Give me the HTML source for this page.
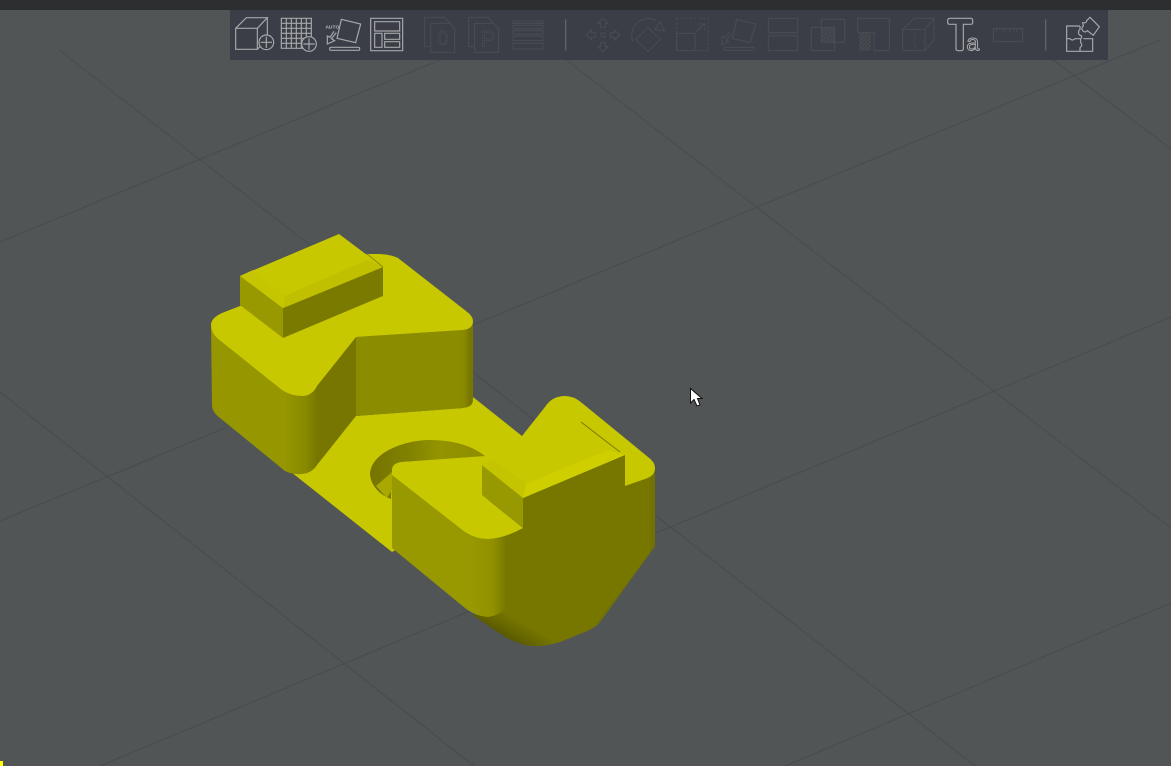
<!DOCTYPE html>
<html><head><meta charset="utf-8"><style>
html,body{margin:0;padding:0;background:#515556;width:1171px;height:766px;overflow:hidden}
svg{display:block;position:absolute;left:0;top:0}
text{font-family:"Liberation Sans",sans-serif}
</style></head><body>
<svg width="1171" height="766" viewBox="0 0 1171 766" xmlns="http://www.w3.org/2000/svg">
<defs>
<linearGradient id="g1" gradientUnits="userSpaceOnUse" x1="285" y1="0" x2="318" y2="0"><stop offset="0" stop-color="#969600"/><stop offset=".35" stop-color="#8e8e00"/><stop offset=".6" stop-color="#8a8a00"/><stop offset="1" stop-color="#767600"/></linearGradient>
<linearGradient id="g2" gradientUnits="userSpaceOnUse" x1="458" y1="0" x2="470" y2="0"><stop offset="0" stop-color="#8c8c00"/><stop offset=".5" stop-color="#8a8a00"/><stop offset="1" stop-color="#767600"/></linearGradient>
<linearGradient id="g3" gradientUnits="userSpaceOnUse" x1="470" y1="0" x2="506" y2="0"><stop offset="0" stop-color="#989800"/><stop offset=".6" stop-color="#929200"/><stop offset="1" stop-color="#787800"/></linearGradient>
<linearGradient id="g4" gradientUnits="userSpaceOnUse" x1="515" y1="645" x2="527" y2="624"><stop offset="0" stop-color="#555500"/><stop offset=".5" stop-color="#686800"/><stop offset="1" stop-color="#777700"/></linearGradient>
<linearGradient id="g5" gradientUnits="userSpaceOnUse" x1="370" y1="0" x2="486" y2="0"><stop offset="0" stop-color="#747400"/><stop offset=".35" stop-color="#828200"/><stop offset=".6" stop-color="#949400"/><stop offset="1" stop-color="#8c8c00"/></linearGradient>
<pattern id="h" width="8" height="8" patternUnits="userSpaceOnUse" patternTransform="rotate(45)"><rect width="8" height="8" fill="#3f4249"/><rect width="3" height="8" fill="#4c4e54"/></pattern>
</defs>
<rect width="1171" height="766" fill="#515556"/>
<g stroke="#4a4b52" stroke-width="1.1" fill="none">
<path d="M59,50L310,245"/>
<path d="M0,242L440,60"/>
<path d="M560,55L1171,528"/>
<path d="M473,325L1160,40"/>
<path d="M1040,50L1171,149"/>
<path d="M1171,317L100,766"/>
<path d="M0,392L474,766"/>
<path d="M0,521L225,428"/>
<path d="M473,372L975,766"/>
<path d="M1171,603L785,766"/>
</g>
<rect x="0" y="0" width="1171" height="10" fill="#2d2e30"/>
<rect x="230" y="10" width="878" height="50" fill="#3b3e47"/>
<!-- model -->
<polygon points="291,472 356,416 463,408 473,397 522,436 530,480 450,520 392,552" fill="#c8c800"/>
<path d="M370,473C372,452 405,440 430,440C455,440 475,447 486,457L402,462Q392,465 392,470L391,499C378,494 370,484 370,473z" fill="url(#g5)"/>
<polygon points="376,486 392,472 392,490 387,498" fill="#a8a800"/>
<path d="M211,325L212,405Q212,412 220,418L285,471Q293,475 302,474Q312,473 317,465L356,416L356,337L300,390z" fill="url(#g1)"/>
<path d="M356,337L463,330Q473,329 473,321L473,400Q473,407 463,408L356,416z" fill="url(#g2)"/>
<path d="M240,306L222,313Q211,318 211,325Q211,332 217,338L282,390Q291,396 302,396Q312,396 317,386L356,337L463,330Q473,329 473,321Q473,316 466,311L398,258Q390,254 378,254L367,254z" fill="#c8c800"/>
<polygon points="240,276 283,308 283,338 240,305" fill="#989800"/>
<polygon points="283,308 383,267 383,296 283,338" fill="#7a7a00"/>
<polygon points="240,276 339,234 383,267 283,308" fill="#c8c800"/>
<polygon points="285,296 367,260 383,267 283,308" fill="#c0c000"/>
<polygon points="240,276 253,270 285,296 283,308" fill="#c6c600"/>
<path d="M367,254L383,267" stroke="#8c8c00" stroke-width="1"/>
<path d="M523,498L625,455L625,486L650,476L655,468L655,546L600,622Q595,628 585,632L560,642Q540,648 525,645Q515,642 505,635L475,615Q488,618 505,609L505,535L523,528z" fill="#777700"/>
<path d="M650,476L655,468V546L650,553z" fill="#727200"/>
<path d="M650,553L655,546L600,622L595,624z" fill="#727200"/>
<path d="M471,614Q488,619 505,609L559,641Q540,648 525,645Q515,642 505,637z" fill="url(#g4)"/>
<path d="M392,470L392,548L465,608Q475,616 488,617Q498,616 505,609L505,530L470,500z" fill="url(#g3)"/>
<path d="M392,470Q392,463 402,462L485,456L482,465L482,495L523,528Q505,538 488,539Q476,539 465,532L392,475z" fill="#c8c800"/>
<polygon points="482,465 523,498 523,528 482,495" fill="#989800"/>
<path d="M522,436L545,407Q552,396 565,396Q574,396 582,403L648,457Q655,462 655,468Q655,476 645,479L625,486L625,455L523,498L482,465L485,456z" fill="#c8c800"/>
<polygon points="482,465 493,459 526,484 523,498" fill="#c4c400"/>
<polygon points="526,484 608,450 625,455 523,498" fill="#cfcf00"/>
<path d="M581,422L620,452" stroke="#7a7a00" stroke-width="1"/>
<!-- toolbar group 1 -->
<g transform="translate(228 0) scale(.33333)" fill="none" stroke="#a6a8aa" stroke-width="3.5">
<path d="M23,85H88V148H23zM23,85L55,53H118L88,85M88,148L118,115V53"/>
<circle cx="115" cy="127" r="22" fill="#3b3e47"/><path d="M115,110V144M98,127H132"/>
<path d="M160,55H250V145H160zM175,55V145M190,55V145M205,55V145M220,55V145M235,55V145M160,70H250M160,85H250M160,100H250M160,115H250M160,130H250"/>
<circle cx="243" cy="132" r="22" fill="#3b3e47"/><path d="M243,115V149M226,132H260"/>
<text x="292" y="85" font-size="15" fill="#b8babc" stroke="none" font-weight="bold">AUTO</text>
<path d="M340,58L398,72L383,128L327,115z"/>
<path d="M325,98L310,116L320,122L298,132L298,108L306,112L318,94"/>
<rect x="305" y="142" width="90" height="9" rx="4"/>
<path d="M428,55H524V152H428zM440,65H515V93H440zM440,100H462V142H440zM470,100H515V118H470zM470,125H515V142H470z"/>
<g stroke="#4a4c52" stroke-width="3">
<path d="M605,140H590V52H650L665,68M608,70H665L680,85V157H608z"/>
<text x="628" y="135" font-size="60" fill="none" stroke-width="2">0</text>
<path d="M737,140H722V52H780L795,68M740,70H795L812,85V157H740z"/>
<text x="758" y="140" font-size="66" fill="none" stroke-width="2">P</text>
<path d="M855,63H945V70H855zM855,76H945V86H855zM855,92H945V102H855zM855,108H945V122H855zM855,130H945V147H855z"/>
<path d="M1125,55L1140,70H1132V82H1118V70H1110zM1125,155L1140,140H1132V128H1118V140H1110zM1075,105L1090,90V98H1102V112H1090V120zM1175,105L1160,90V98H1148V112H1160V120zM1119,99H1131V111H1119z"/>
<path d="M1215,125A50,50 0 0 1 1285,62M1295,65L1310,92L1280,90zM1260,82L1297,118L1260,155L1223,118z"/>
</g>
<path d="M1013,58V152" stroke="#616368" stroke-width="4"/>
</g>
<!-- toolbar group 2 -->
<g transform="translate(670 0) scale(.33333)" fill="none" stroke="#4a4c52" stroke-width="3">
<path d="M20,55H115V152H20z" stroke-dasharray="7 6"/>
<path d="M20,100H75V152H20zM78,95L105,70M85,72H105V92"/>
<path d="M200,58L257,72L240,128L187,115zM185,100L168,122L177,126L156,134V110L164,114L178,96"/>
<rect x="163" y="142" width="90" height="9" rx="4"/>
<path d="M295,55H383V97H295zM295,108H383V152H295z"/>
<path d="M295,102H383" stroke-dasharray="3 3"/>
<rect x="454" y="82" width="40" height="45" fill="url(#h)" stroke="none"/>
<path d="M454,58H524V127H454zM424,82H494V152H424z"/>
<rect x="567" y="97" width="36" height="55" fill="url(#h)" stroke="none"/>
<path d="M563,55H658V152H612V97H563z"/>
<path d="M698,88H765V152H698zM698,88L733,55H792L765,88M765,152L792,120V55"/>
<path d="M727,88L737,110L730,125L742,152" stroke-dasharray="4 3" stroke-width="2.5"/>
<path d="M970,85H1058V125H970zM980,85V97M990,85V92M1000,85V97M1010,85V92M1020,85V97M1030,85V92M1040,85V97M1050,85V92"/>
<path d="M1127,58V152" stroke="#616368" stroke-width="4"/>
<g stroke="#a6a8aa" stroke-width="3.5">
<path d="M840,55H902Q908,55 908,61V67Q908,73 902,73H880V146Q880,152 874,152H864Q858,152 858,146V73H840Q833,73 833,67V61Q833,55 840,55z"/>
<text x="889" y="151" font-size="70" fill="#3b3e47" stroke-width="3">a</text>
<path d="M1230,78H1190V154H1268V116H1240"/>
<path d="M1230,78V88Q1222,95 1228,105Q1240,108 1232,116V128Q1240,135 1230,143V154"/>
<path d="M1190,116H1200Q1208,124 1215,116H1232"/>
<path d="M1260,52L1288,80L1270,106L1252,92Q1245,100 1238,92Q1232,84 1240,78L1238,68Q1250,70 1250,62z"/>
</g>
</g>
<!-- cursor -->
<polygon points="690.5,388.5 690.5,403 694,399.5 697,406 700,405 697.5,398.5 702,398.5" fill="#fff" stroke="#111" stroke-width="1"/>
<rect x="0" y="761" width="3" height="5" fill="#ffff00"/>
</svg>
</body></html>
